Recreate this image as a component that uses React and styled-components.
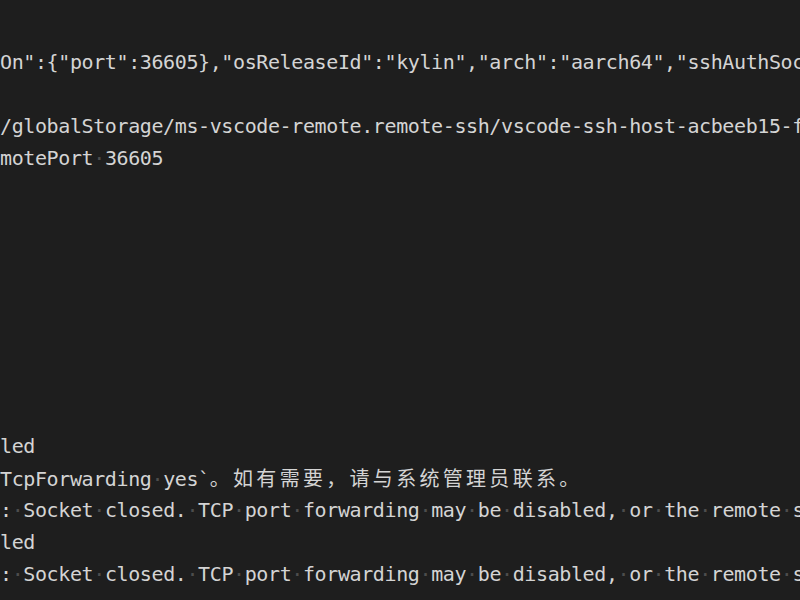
import React from "react";
import styled, { createGlobalStyle } from "styled-components";

const GlobalStyle = createGlobalStyle`
  html, body, #root {
    margin: 0;
    padding: 0;
    background-color: #1e1e1e;
    color-scheme: dark;
    forced-color-adjust: none;
    filter: none !important;
  }
`;

const Editor = styled.div`
  width: 800px;
  height: 600px;
  overflow: hidden;
  background-color: #1e1e1e;
  padding-top: 14px;
  box-sizing: border-box;
`;

const Line = styled.div`
  height: 32px;
  line-height: 32px;
  white-space: pre;
  font-family: "DejaVu Sans Mono", "Noto Sans CJK SC", monospace;
  font-size: 20px;
  letter-spacing: -0.39px;
  color: #d4d4d4;
`;

const Dot = styled.span`
  color: #4d4d4d;
`;

const Wide = styled.span`
  font-family: "Noto Sans CJK SC", sans-serif;
  font-size: 20px;
  letter-spacing: 3.3px;
`;

const lines = [
  "",
  'On":{"port":36605},"osReleaseId":"kylin","arch":"aarch64","sshAuthSoc',
  "",
  "/globalStorage/ms-vscode-remote.remote-ssh/vscode-ssh-host-acbeeb15-f",
  "motePort 36605",
  "",
  "",
  "",
  "",
  "",
  "",
  "",
  "",
  "led",
  "TcpForwarding yes`。如有需要，请与系统管理员联系。",
  ": Socket closed. TCP port forwarding may be disabled, or the remote s",
  "led",
  ": Socket closed. TCP port forwarding may be disabled, or the remote s",
  "",
];

// spaces show as faint dots, CJK text takes two columns
const renderText = (text) => {
  const parts = text.split(/( |[\u3000-\u303f\u4e00-\u9fff\uff00-\uffef]+)/);
  return parts.map((part, i) => {
    if (part === " ") return <Dot key={i}>·</Dot>;
    if (/^[\u3000-\u303f\u4e00-\u9fff\uff00-\uffef]+$/.test(part))
      return <Wide key={i}>{part}</Wide>;
    return part;
  });
};

export default function App() {
  return (
    <>
      <meta name="color-scheme" content="dark" />
      <GlobalStyle />
      <Editor>
        {lines.map((text, i) => (
          <Line key={i}>{renderText(text)}</Line>
        ))}
      </Editor>
    </>
  );
}
